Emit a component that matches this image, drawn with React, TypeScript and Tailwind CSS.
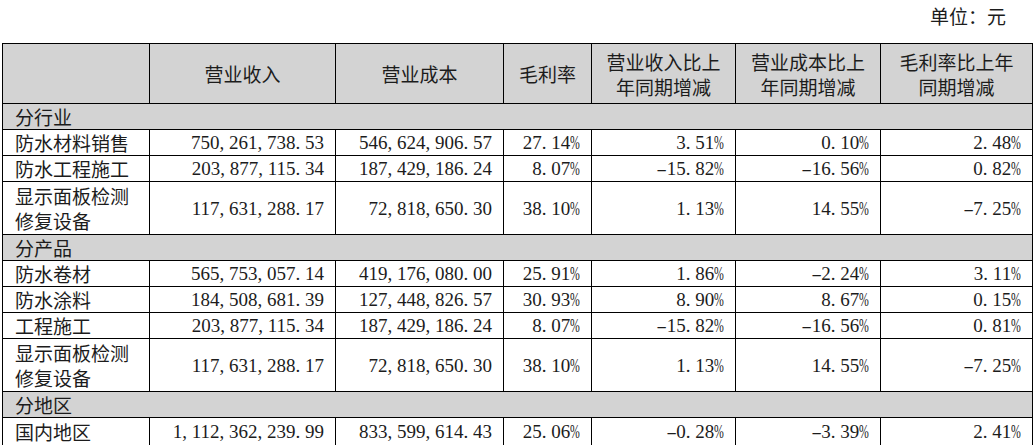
type Row =
  | { kind: "section"; label: string }
  | { kind: "data"; label: string[]; values: string[]; tall?: boolean };

// 按行业 / 产品 / 地区拆分的营业收入表
const HEAD = [
  "营业收入",
  "营业成本",
  "毛利率",
  "营业收入比上年同期增减",
  "营业成本比上年同期增减",
  "毛利率比上年同期增减",
];

const ROWS: Row[] = [
  { kind: "section", label: "分行业" },
  {
    kind: "data",
    label: ["防水材料销售"],
    values: ["750,261,738.53", "546,624,906.57", "27.14%", "3.51%", "0.10%", "2.48%"],
  },
  {
    kind: "data",
    label: ["防水工程施工"],
    values: ["203,877,115.34", "187,429,186.24", "8.07%", "-15.82%", "-16.56%", "0.82%"],
  },
  {
    kind: "data",
    label: ["显示面板检测", "修复设备"],
    values: ["117,631,288.17", "72,818,650.30", "38.10%", "1.13%", "14.55%", "-7.25%"],
    tall: true,
  },
  { kind: "section", label: "分产品" },
  {
    kind: "data",
    label: ["防水卷材"],
    values: ["565,753,057.14", "419,176,080.00", "25.91%", "1.86%", "-2.24%", "3.11%"],
  },
  {
    kind: "data",
    label: ["防水涂料"],
    values: ["184,508,681.39", "127,448,826.57", "30.93%", "8.90%", "8.67%", "0.15%"],
  },
  {
    kind: "data",
    label: ["工程施工"],
    values: ["203,877,115.34", "187,429,186.24", "8.07%", "-15.82%", "-16.56%", "0.81%"],
  },
  {
    kind: "data",
    label: ["显示面板检测", "修复设备"],
    values: ["117,631,288.17", "72,818,650.30", "38.10%", "1.13%", "14.55%", "-7.25%"],
    tall: true,
  },
  { kind: "section", label: "分地区" },
  {
    kind: "data",
    label: ["国内地区"],
    values: ["1,112,362,239.99", "833,599,614.43", "25.06%", "-0.28%", "-3.39%", "2.41%"],
  },
];

// Song-style figures: punctuation takes a full half-width cell like the digits.
function Num({ v }: { v: string }) {
  return (
    <>
      {v.split("").map((c, i) =>
        c === "," || c === "." ? (
          <span key={i} className="inline-block w-[0.5em] text-left">
            {c}
          </span>
        ) : c === "-" ? (
          <span key={i} className="inline-block w-[0.5em] scale-x-[1.7] text-center">
            {c}
          </span>
        ) : c === "%" ? (
          <span key={i} className="inline-block w-[0.52em] origin-left scale-x-[0.62]">
            {c}
          </span>
        ) : (
          <span key={i}>{c}</span>
        )
      )}
    </>
  );
}

export default function App() {
  return (
    <div className="w-[1033px] bg-white text-[#1c1c1c] font-['Noto_Sans_CJK_SC',sans-serif] text-[19px] leading-[25px]">
      <div className="flex h-[43px] justify-end pr-[27px] pt-[3px]">
        <span>单位：元</span>
      </div>
      <table className="ml-[2px] w-[1030px] table-fixed border-collapse">
        <colgroup>
          <col className="w-[147px]" />
          <col className="w-[186px]" />
          <col className="w-[168px]" />
          <col className="w-[88px]" />
          <col className="w-[144px]" />
          <col className="w-[145px]" />
          <col className="w-[152px]" />
        </colgroup>
        <thead>
          <tr className="h-[60px] bg-[#d3d3d3]">
            <th className="border border-black" />
            {HEAD.map((h) => (
              <th key={h} className="border border-black px-[14px] text-center font-normal">
                {h}
              </th>
            ))}
          </tr>
        </thead>
        <tbody>
          {ROWS.map((r, i) =>
            r.kind === "section" ? (
              <tr key={i} className="h-[26px] bg-[#d3d3d3]">
                <td colSpan={7} className="border border-black pl-[12px]">
                  {r.label}
                </td>
              </tr>
            ) : (
              <tr key={i} className={r.tall ? "h-[53px]" : i === ROWS.length - 1 ? "h-[28px]" : "h-[26px]"}>
                <td className="border border-black pl-[12px]">
                  {r.label.map((l) => (
                    <div key={l}>{l}</div>
                  ))}
                </td>
                {r.values.map((v, j) => (
                  <td
                    key={j}
                    className="whitespace-nowrap border border-black pr-[11px] text-right font-['Liberation_Serif',serif] text-[19px] [font-variant-numeric:tabular-nums]"
                  >
                    <Num v={v} />
                  </td>
                ))}
              </tr>
            )
          )}
        </tbody>
      </table>
    </div>
  );
}
